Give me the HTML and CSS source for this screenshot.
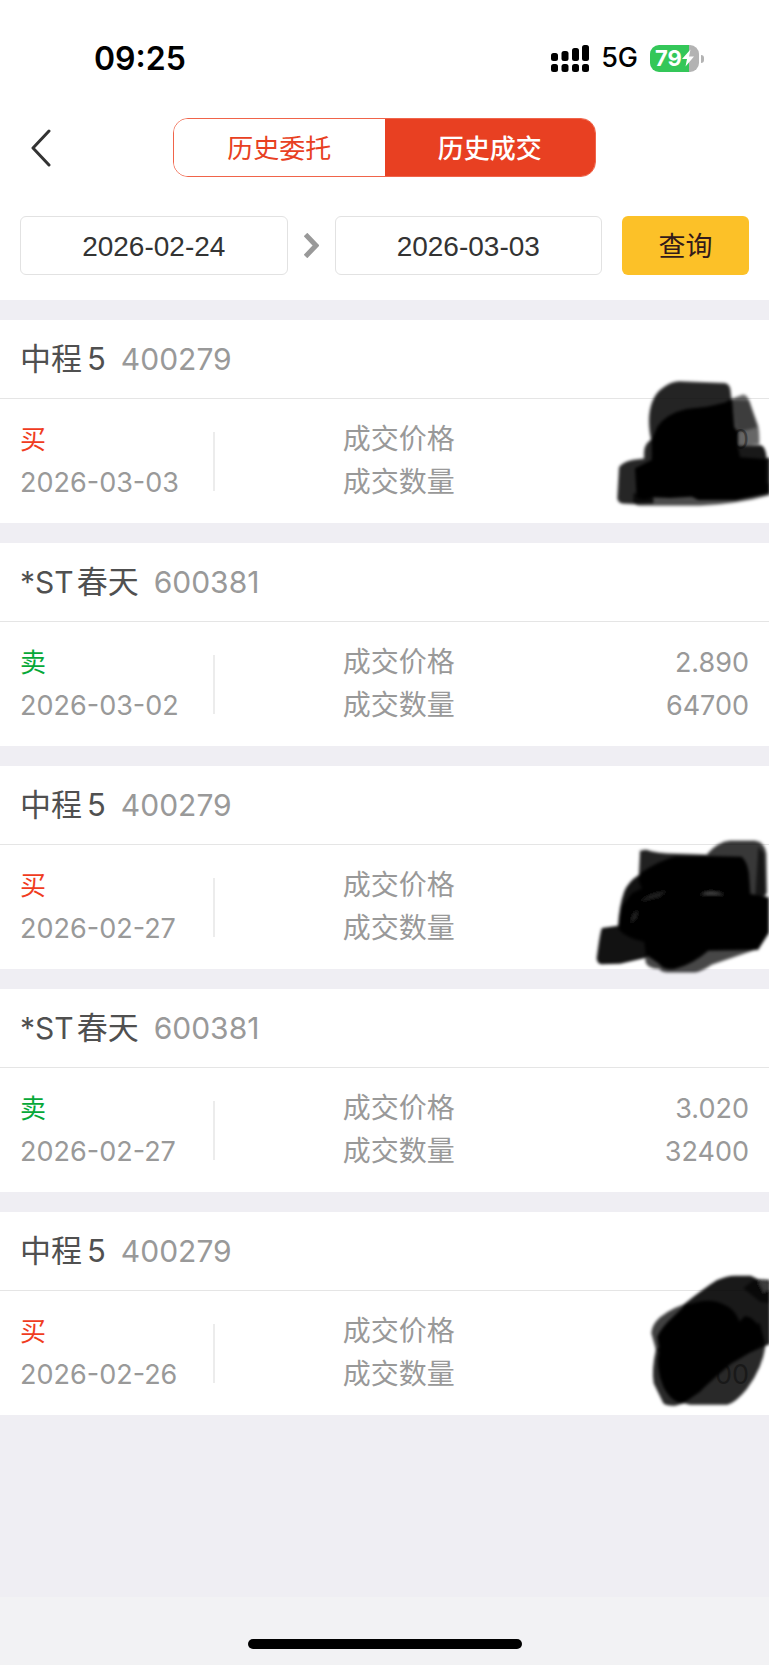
FILE: index.html
```html
<!DOCTYPE html>
<html lang="zh-CN">
<head>
<meta charset="utf-8">
<meta name="viewport" content="width=device-width, initial-scale=1">
<title>历史成交</title>
<link rel="stylesheet" href="styles.css">
</head>
<body>
<div class="page">
  <header class="header">
    <div class="status">
      <time class="clock">09:25</time>
      <div class="status-right">
        <svg class="signal" viewBox="0 0 38 27" aria-hidden="true">
          <rect x="0" y="8" width="7" height="8" rx="2.5"/><rect x="10.5" y="6" width="7" height="10" rx="2.5"/><rect x="21" y="3" width="7" height="13" rx="2.5"/><rect x="31" y="0" width="7" height="16" rx="2.5"/>
          <rect x="0" y="19" width="7" height="8" rx="2.5"/><rect x="10.5" y="19" width="7" height="8" rx="2.5"/><rect x="21" y="19" width="7" height="8" rx="2.5"/><rect x="31" y="19" width="7" height="8" rx="2.5"/>
        </svg>
        <span class="network">5G</span>
        <div class="battery">
          <span class="battery-level">79</span>
          <svg class="bolt" viewBox="0 0 12 17" aria-hidden="true"><path d="M8.500 0 0 9.500H5L3.500 17 12 7H7Z"/></svg>
        </div>
      </div>
    </div>
    <nav class="nav">
      <button class="back" type="button" aria-label="返回">
        <svg viewBox="0 0 20 38" aria-hidden="true"><path d="M18 2 2 19 18 36"/></svg>
      </button>
      <div class="tabs">
        <button class="tab" type="button">历史委托</button>
        <button class="tab tab-active" type="button">历史成交</button>
      </div>
    </nav>
    <form class="filter">
      <input class="date" type="text" value="2026-02-24" aria-label="开始日期">
      <svg class="arrow" viewBox="0 0 15 25" aria-hidden="true"><path d="M1.5 1.5 12 12.500 1.5 23.5"/></svg>
      <input class="date" type="text" value="2026-03-03" aria-label="结束日期">
      <button class="query" type="button">查询</button>
    </form>
  </header>

  <main class="list">
    <article class="card">
      <h2 class="title"><span>中程<span class="digit">5</span></span><span class="code">400279</span></h2>
      <div class="detail">
        <div class="side"><span class="buy">买</span><time>2026-03-03</time></div>
        <dl class="facts"><div><dt>成交价格</dt><dd>0</dd></div><div><dt>成交数量</dt><dd></dd></div></dl>
      </div>
      <svg class="ink ink-a" viewBox="0 0 687 510" aria-hidden="true">
        <defs><filter id="soft" x="-5%" y="-5%" width="110%" height="110%"><feGaussianBlur stdDeviation="4"/></filter></defs>
        <g filter="url(#soft)">
          <path opacity=".6" d="M560 122 608 104Q620 104 626 119L652 190Q659 205 658 253L560 265Z"/>
          <path opacity=".86" d="M333 238C318 165 332 112 365 86Q392 64 418 64L555 69Q568 71 571 88L584 200 590 290 340 300Z"/>
          <path opacity=".4" d="M574 120 628 122 652 202 590 218Z"/>
          <path opacity=".85" d="M335 238Q312 250 312 278V296Q250 300 237 322L232 415Q234 430 250 431L280 432 340 430 340 240Z"/>
          <path opacity=".7" d="M280 400V424Q285 437 300 437H480Q600 430 690 405V370Z"/>
          <path opacity=".9" d="M580 258 662 256Q676 258 680 294H690V400L580 410Z"/>
          <path d="M336 238 352 200Q380 160 440 147L500 140Q560 128 576 120L582 200 594 215V262L600 292 680 298V402L588 420H475L455 410 390 414 335 412Q310 425 290 412L285 325 335 300Z"/>
        </g>
      </svg>
    </article>

    <article class="card">
      <h2 class="title"><span><span class="latin">*ST</span>春天</span><span class="code">600381</span></h2>
      <div class="detail">
        <div class="side"><span class="sell">卖</span><time>2026-03-02</time></div>
        <dl class="facts"><div><dt>成交价格</dt><dd>2.890</dd></div><div><dt>成交数量</dt><dd>64700</dd></div></dl>
      </div>
    </article>

    <article class="card">
      <h2 class="title"><span>中程<span class="digit">5</span></span><span class="code">400279</span></h2>
      <div class="detail">
        <div class="side"><span class="buy">买</span><time>2026-02-27</time></div>
        <dl class="facts"><div><dt>成交价格</dt><dd></dd></div><div><dt>成交数量</dt><dd></dd></div></dl>
      </div>
      <svg class="ink ink-b" viewBox="0 0 627 510" aria-hidden="true">
        <g filter="url(#soft)">
          <path opacity=".78" d="M440 103Q475 64 510 62H585Q613 66 619 100L621 220 560 260Z"/>
          <path opacity=".87" d="M240 92 258 89Q290 101 350 101L440 104 500 200 250 205Q236 195 236 180Z"/>
          <path opacity=".93" d="M236 165Q205 185 193 214Q178 255 174 317L126 324Q121 330 110 415Q112 432 124 433L180 431 258 413 300 360 420 230 280 180Z"/>
          <path opacity=".72" d="M256 380V425Q262 446 298 447Q304 457 320 457H405Q425 455 455 434L580 391 600 380 400 350Z"/>
          <path d="M240 160Q300 120 345 110L440 108 545 110Q567 130 568 180L571 222 627 232V338L594 390 445 392Q400 432 345 447 310 452 296 430L258 405 252 365Q200 355 176 328L185 260 215 220 245 205Z"/>
          <path opacity=".6" d="M595 80 612 100 617 235 585 240Z"/>
          <path fill="#2e2e2e" opacity=".7" d="M243 244Q260 222 320 212L300 230ZM212 310Q213 280 233 269L230 295Z"/>
          <path fill="#777" opacity=".7" d="M420 223Q450 208 495 223Z"/>
        </g>
      </svg>
    </article>

    <article class="card">
      <h2 class="title"><span><span class="latin">*ST</span>春天</span><span class="code">600381</span></h2>
      <div class="detail">
        <div class="side"><span class="sell">卖</span><time>2026-02-27</time></div>
        <dl class="facts"><div><dt>成交价格</dt><dd>3.020</dd></div><div><dt>成交数量</dt><dd>32400</dd></div></dl>
      </div>
    </article>

    <article class="card">
      <h2 class="title"><span>中程<span class="digit">5</span></span><span class="code">400279</span></h2>
      <div class="detail">
        <div class="side"><span class="buy">买</span><time>2026-02-26</time></div>
        <dl class="facts"><div><dt>成交价格</dt><dd></dd></div><div><dt>成交数量</dt><dd>00</dd></div></dl>
      </div>
      <svg class="ink ink-c" viewBox="0 0 507 540" aria-hidden="true">
        <g filter="url(#soft)">
          <path opacity=".75" d="M265 160Q220 170 180 202 155 224 154 250L168 300 190 310 300 180Z"/>
          <path opacity=".9" d="M250 164Q315 113 350 91 378 77 405 77H452L474 88 510 90V282L400 330 230 300Z"/>
          <path opacity=".84" d="M168 298Q154 360 161 400L190 460Q197 468 225 467L252 460 270 464H382Q405 460 440 418 490 350 496 285L480 220 300 240Z"/>
          <path d="M250 170Q310 145 350 155 405 170 418 215L435 198Q475 203 493 275 465 300 395 340 330 395 300 425L250 460Q215 458 190 410 165 350 178 300L172 260Q185 230 225 195Z"/>
          <path opacity=".65" d="M465 86 482 100 510 125V160L480 155 430 115Z"/>
          <path fill="#555" opacity=".6" d="M475 95 505 95V120L490 128Z"/>
        </g>
      </svg>
    </article>
  </main>

  <footer class="home"><div class="home-bar"></div></footer>
</div>
</body>
</html>
```

FILE: styles.css
```css
* { box-sizing: border-box; }

body {
  margin: 0;
  background: #efeef3;
  color: #505050;
  font-family: Inter, "Noto Sans CJK SC", sans-serif;
}

button, input { font: inherit; margin: 0; padding: 0; }

.page {
  display: flex;
  flex-direction: column;
  min-height: 100vh;
}

.header {
  background: #fff;
  padding-bottom: 25px;
}

.status {
  display: flex;
  align-items: center;
  justify-content: space-between;
  height: 118px;
  padding: 0 70px 2px 94px;
  color: #000;
}

.clock { font-size: 32px; font-weight: 600; }

.status-right { display: flex; align-items: center; gap: 12px; }
.signal { width: 38px; height: 27px; }
.network { font-size: 27px; font-weight: 500; line-height: 28px; }

.battery {
  position: relative;
  display: flex;
  align-items: center;
  width: 49px;
  height: 27px;
  padding-left: 5px;
  border-radius: 9px;
  background: linear-gradient(to right, #34c759 79%, #b3b3b3 79%);
}
.battery::after {
  content: "";
  position: absolute;
  left: 51px;
  top: 10px;
  width: 3px;
  height: 8px;
  border-radius: 0 4px 4px 0;
  background: #b3b3b3;
}
.battery-level { color: #fff; font-size: 22px; font-weight: 700; line-height: 26px; }
.bolt { width: 12px; height: 18px; fill: #fff; }

.nav {
  display: grid;
  grid-template-columns: 1fr 55% 1fr;
  align-items: center;
  padding-bottom: 39px;
}

.back {
  width: 20px;
  height: 38px;
  margin-left: 31px;
  border: 0;
  background: none;
}
.back svg {
  display: block;
  width: 20px;
  height: 38px;
  fill: none;
  stroke: #333;
  stroke-width: 3;
  stroke-linecap: round;
  stroke-linejoin: round;
}

.tabs {
  display: flex;
  height: 59px;
  overflow: hidden;
  border: 1px solid #f0644a;
  border-radius: 15px;
}
.tab {
  flex: 1;
  padding-bottom: 2px;
  border: 0;
  background: #fff;
  color: #e84022;
  font-size: 26px;
}
.tab-active { background: #e84022; color: #fff; font-weight: 500; }

.filter {
  display: flex;
  align-items: center;
  padding: 0 20px;
}
.date {
  flex: 1;
  min-width: 0;
  height: 59px;
  padding-top: 2px;
  border: 1px solid #e2e2e2;
  border-radius: 6px;
  background: #fff;
  color: #333;
  font-family: "Liberation Sans", Arial, sans-serif;
  font-size: 28px;
  text-align: center;
}
.arrow {
  width: 15px;
  height: 25px;
  margin: 0 16px;
  fill: none;
  stroke: #999;
  stroke-width: 5;
}
.query {
  width: 127px;
  height: 59px;
  padding-bottom: 2px;
  margin-left: 20px;
  border: 0;
  border-radius: 6px;
  background: #fcc128;
  color: #331a1a;
  font-size: 27px;
}

.list {
  display: grid;
  gap: 20px;
  padding: 20px 0;
}

.card { position: relative; background: #fff; }

.title {
  display: flex;
  align-items: baseline;
  gap: 15px;
  height: 79px;
  margin: 0;
  padding: 0 20px;
  border-bottom: 1px solid #e5e5e5;
  font-size: 31px;
  font-weight: 400;
  line-height: 78px;
}
.digit { margin-left: 5px; }
.latin { margin-right: 3px; font-size: 30px; }
.code { color: #999; font-size: 30px; }

.detail {
  display: grid;
  grid-template-columns: 28% 1fr;
  align-items: center;
  padding: 19px 0;
  color: #999;
  font-size: 27px;
  line-height: 43px;
}
.side {
  position: relative;
  display: flex;
  flex-direction: column;
  padding-left: 20px;
}
.side::after {
  content: "";
  position: absolute;
  right: 0;
  top: 14px;
  width: 2px;
  height: 59px;
  background: #ececec;
}
.buy { color: #f03c1e; font-size: 26px; }
.sell { color: #06a838; font-size: 26px; }

.facts { margin: 0; padding: 0 20px 0 23%; }
.facts div { display: flex; justify-content: space-between; }
.facts dt { font-size: 28px; }
.facts dd { margin: 0; }

.ink { position: absolute; right: 0; z-index: 1; }
.ink-a { top: 40px; width: 229px; height: 170px; }
.ink-b { top: 54px; width: 209px; height: 170px; }
.ink-c { top: 38px; width: 169px; height: 180px; }

.home {
  display: flex;
  justify-content: center;
  height: 68px;
  margin-top: auto;
  padding-top: 42px;
  background: #f2f2f4;
}
.home-bar {
  width: 274px;
  height: 10px;
  border-radius: 5px;
  background: #000;
}
```
